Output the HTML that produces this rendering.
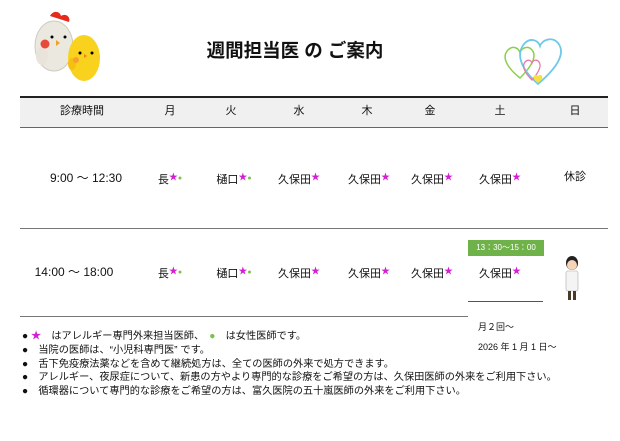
<!DOCTYPE html>
<html><head><meta charset="utf-8"><style>
body{margin:0;width:620px;height:441px;background:#fff;font-family:"Liberation Sans","Noto Sans CJK JP",sans-serif;position:relative;overflow:hidden;color:#111}
.a{position:absolute;white-space:nowrap}
.c{transform:translateX(-50%)}
.s{color:#d21fd2;font-size:9px;vertical-align:3px}
.g{color:#7cc24a;font-size:7px;vertical-align:3px}
.n{font-size:11px;line-height:14px}
</style></head><body>
<svg class="a" style="left:30px;top:8px" width="78" height="78" viewBox="0 0 78 78">
<path d="M20 8c3-6 10-5 11 0 4-3 10 0 8 6z" fill="#e42b1c"/>
<ellipse cx="24" cy="38" rx="19" ry="25" fill="#ebe8e0" stroke="#cfcac0"/>
<ellipse cx="12" cy="48" rx="6" ry="9" fill="#e8e4dc"/>
<circle cx="15" cy="36" r="4.5" fill="#e84a3a"/>
<path d="M26 32l4 3-4 3z" fill="#f5a020"/>
<circle cx="22" cy="29" r="1.5" fill="#000"/><circle cx="35" cy="29" r="1.5"/>
<ellipse cx="54" cy="50" rx="16" ry="23" fill="#f8d21c"/>
<ellipse cx="42" cy="56" rx="4" ry="6" fill="#f5c010"/>
<circle cx="50" cy="45" r="1.5"/><circle cx="62" cy="45" r="1.5"/>
<path d="M54 46l3 2-3 2z" fill="#f08020"/>
<circle cx="46" cy="52" r="3" fill="#f6a030"/>
</svg>
<div class="a c" style="left:295px;top:37px;font-size:18.5px;font-weight:bold">週間担当医 の ご案内</div>
<svg class="a" style="left:500px;top:28px" width="66" height="62" viewBox="0 0 66 62">
<path d="M20 50C5 38 2 28 8 22c5-5 11-2 12 3 1-5 8-8 12-3 5 6 0 16-12 28z" fill="none" stroke="#8ccf4a" stroke-width="1.5"/>
<path d="M38 56C20 40 16 26 24 16c6-7 14-4 16 2 2-6 12-10 18-3 8 10 0 24-20 41z" fill="none" stroke="#6ec8e8" stroke-width="1.8"/>
<path d="M32 52C24 44 22 38 25 34c3-3 6-2 7 1 1-3 5-4 7-1 3 4 0 10-7 18z" fill="none" stroke="#e87aa8" stroke-width="1.3"/>
<path d="M38 55c-4-3-5-5-4-7 1-2 3-1 4 0 1-1 3-2 4 0 1 2 0 4-4 7z" fill="#f5e040"/>
</svg>
<div class="a" style="left:20px;top:96px;width:588px;height:29px;background:#f0f0f0;border-top:2px solid #222;border-bottom:1px solid #666"></div>
<div class="a c n" style="left:82px;top:104px">診療時間</div>
<div class="a c n" style="left:170px;top:104px">月</div>
<div class="a c n" style="left:231px;top:104px">火</div>
<div class="a c n" style="left:299px;top:104px">水</div>
<div class="a c n" style="left:367px;top:104px">木</div>
<div class="a c n" style="left:430px;top:104px">金</div>
<div class="a c n" style="left:500px;top:104px">土</div>
<div class="a c n" style="left:575px;top:104px">日</div>
<div class="a c" style="left:86px;top:169px;font-size:12px">9:00 ～ 12:30</div>
<div class="a c n" style="left:170px;top:170px">長<span class="s">★</span><span class="g">●</span></div>
<div class="a c n" style="left:234px;top:170px">樋口<span class="s">★</span><span class="g">●</span></div>
<div class="a c n" style="left:299px;top:170px">久保田<span class="s">★</span></div>
<div class="a c n" style="left:369px;top:170px">久保田<span class="s">★</span></div>
<div class="a c n" style="left:432px;top:170px">久保田<span class="s">★</span></div>
<div class="a c n" style="left:500px;top:170px">久保田<span class="s">★</span></div>
<div class="a c n" style="left:575px;top:170px">休診</div>
<div class="a" style="left:20px;top:228px;width:588px;height:1px;background:#777"></div>
<div class="a" style="left:468px;top:240px;width:76px;height:16px;background:#6fb24a;color:#fff;font-size:8px;line-height:16px;text-align:center">13：30～15：00</div>
<div class="a c" style="left:74px;top:263px;font-size:12px">14:00 ～ 18:00</div>
<div class="a c n" style="left:170px;top:264px">長<span class="s">★</span><span class="g">●</span></div>
<div class="a c n" style="left:234px;top:264px">樋口<span class="s">★</span><span class="g">●</span></div>
<div class="a c n" style="left:299px;top:264px">久保田<span class="s">★</span></div>
<div class="a c n" style="left:369px;top:264px">久保田<span class="s">★</span></div>
<div class="a c n" style="left:432px;top:264px">久保田<span class="s">★</span></div>
<div class="a c n" style="left:500px;top:264px">久保田<span class="s">★</span></div>
<div class="a" style="left:468px;top:301px;width:75px;height:1px;background:#555"></div>
<div class="a" style="left:20px;top:316px;width:448px;height:1px;background:#777"></div>
<svg class="a" style="left:562px;top:255px" width="20" height="46" viewBox="0 0 20 46">
<ellipse cx="10" cy="8" rx="6" ry="7" fill="#222"/>
<ellipse cx="10" cy="10" rx="5" ry="5" fill="#f6d4b8"/>
<rect x="4" y="16" width="12" height="20" rx="2" fill="#f4f4f4" stroke="#aaa" stroke-width=".6"/>
<rect x="6" y="36" width="3" height="9" fill="#4a3a2a"/><rect x="11" y="36" width="3" height="9" fill="#4a3a2a"/>
</svg>
<div class="a" style="left:478px;top:320px;font-size:9px">月２回～</div>
<div class="a" style="left:478px;top:340px;font-size:9px">2026 年 1 月 1 日～</div>
<div class="a" style="left:22px;top:330px;font-size:10.2px;line-height:13.8px">
● <span style="color:#d21fd2">★</span>　はアレルギー専門外来担当医師、　<span style="color:#7cc24a">●</span>　は女性医師です。<br>
●　当院の医師は、“小児科専門医” です。<br>
●　舌下免疫療法薬などを含めて継続処方は、全ての医師の外来で処方できます。<br>
●　アレルギー、夜尿症について、新患の方やより専門的な診療をご希望の方は、久保田医師の外来をご利用下さい。<br>
●　循環器について専門的な診療をご希望の方は、富久医院の五十嵐医師の外来をご利用下さい。
</div>
</body></html>
